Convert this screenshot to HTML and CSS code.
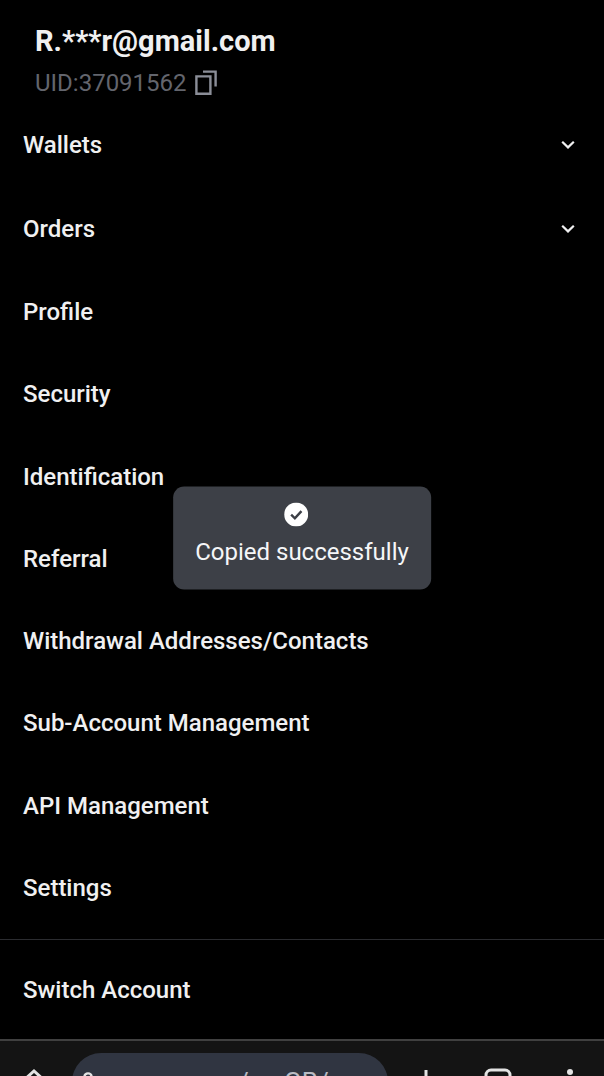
FILE: index.html
```
<!DOCTYPE html>
<html lang="en">
<head>
<meta charset="utf-8">
<meta name="viewport" content="width=device-width, initial-scale=1">
<title>Account</title>
<link rel="stylesheet" href="styles.css">
</head>
<body class="screen">
<main class="account">
  <header class="user">
    <h1 class="user-email">R.***r@gmail.com</h1>
    <div class="user-id">
      <span>UID:37091562</span>
      <button class="icon-button" type="button" aria-label="Copy UID">
        <svg width="22" height="26" viewBox="0 0 22 26" fill="none" stroke="currentColor" stroke-width="2.4"><path d="M1.4 6.4h14v17.4h-14zM8 1.6h12.6v15"/></svg>
      </button>
    </div>
  </header>
  <nav class="menu">
    <button class="menu-row menu-group" type="button" aria-expanded="false">Wallets
      <svg width="16" height="10" viewBox="0 0 16 10" fill="none" stroke="currentColor" stroke-width="2.2"><path d="M2.2 1.8 8 7.4l5.800-5.600"/></svg>
    </button>
    <button class="menu-row menu-group" type="button" aria-expanded="false">Orders
      <svg width="16" height="10" viewBox="0 0 16 10" fill="none" stroke="currentColor" stroke-width="2.2"><path d="M2.2 1.8 8 7.4l5.800-5.600"/></svg>
    </button>
    <a class="menu-row" href="#profile">Profile</a>
    <a class="menu-row" href="#security">Security</a>
    <a class="menu-row" href="#identification">Identification</a>
    <a class="menu-row" href="#referral">Referral</a>
    <a class="menu-row" href="#contacts">Withdrawal Addresses/Contacts</a>
    <a class="menu-row" href="#sub-account">Sub-Account Management</a>
    <a class="menu-row" href="#api">API Management</a>
    <a class="menu-row" href="#settings">Settings</a>
  </nav>
  <div class="switch">
    <button class="menu-row" type="button">Switch Account</button>
  </div>
</main>
<footer class="browser-bar">
  <button class="icon-button" type="button" aria-label="Home">
    <svg width="28" height="28" viewBox="0 0 28 28" fill="none" stroke="currentColor" stroke-width="3"><path d="M3 13 14 3l11 10M6 11v14h16V11"/></svg>
  </button>
  <a class="address" href="#address">
    <svg width="20" height="20" viewBox="0 0 20 20" fill="none" stroke="#e3e3e3" stroke-width="2.400"><circle cx="6" cy="5" r="3.600"/><path d="M12 6h7M1 15h7"/><circle cx="14" cy="15" r="3.600"/></svg>
    <span>mexc.com/en-GB/</span>
  </a>
  <div class="browser-actions">
    <button class="icon-button" type="button" aria-label="New tab">
      <svg width="28" height="28" viewBox="0 0 28 28" fill="none" stroke="currentColor" stroke-width="3"><path d="M14 3v22M3 14h22"/></svg>
    </button>
    <button class="icon-button" type="button" aria-label="Tabs">
      <svg width="28" height="28" viewBox="0 0 28 28" fill="none" stroke="currentColor" stroke-width="3"><rect x="2" y="3" width="24" height="23" rx="5"/></svg>
    </button>
    <button class="icon-button" type="button" aria-label="More">
      <svg width="28" height="28" viewBox="0 0 28 28" fill="currentColor"><circle cx="14" cy="5" r="3"/><circle cx="14" cy="14" r="3"/><circle cx="14" cy="23" r="3"/></svg>
    </button>
  </div>
</footer>
<div class="toast" role="status">
  <svg class="toast-icon" width="24" height="24" viewBox="0 0 24 24" fill="none"><circle cx="12" cy="12" r="12" fill="#fff"/><path d="m7 12.200 3.700 3.600 6.600-7.200" stroke="#3d4047" stroke-width="2.400"/></svg>
  <span>Copied successfully</span>
</div>
</body>
</html>
```
FILE: styles.css
```
* {
  box-sizing: border-box;
}

.screen {
  display: flex;
  flex-direction: column;
  height: 100vh;
  margin: 0;
  overflow: hidden;
  background: #000;
  color: #f0f0f1;
  font-family: Roboto, "Noto Sans", sans-serif;
  font-size: 24px;
  line-height: 32px;
}

svg {
  display: block;
  flex: none;
}

.account {
  display: flex;
  flex: 1;
  flex-direction: column;
}

.user {
  display: flex;
  flex-direction: column;
  gap: 8px;
  padding: 24px 35px 4px;
}

.user-email {
  margin: 0;
  font-size: 29px;
  font-weight: 700;
  line-height: 35px;
}

.user-id {
  display: flex;
  align-items: center;
  gap: 8px;
  color: #63656d;
}

.icon-button {
  padding: 0;
  border: 0;
  background: none;
  color: inherit;
}

.user-id .icon-button {
  color: #8b8e98;
}

.menu {
  display: flex;
  flex: 1;
  flex-direction: column;
  padding-bottom: 10px;
}

.menu-row {
  display: flex;
  flex: 1 1 auto;
  align-items: center;
  justify-content: space-between;
  width: 100%;
  padding: 0 28px 0 23px;
  border: 0;
  background: none;
  color: inherit;
  font: inherit;
  font-weight: 500;
  text-align: left;
  text-decoration: none;
}

.menu-group {
  flex: none;
  height: 84px;
}

.switch {
  display: flex;
  height: 100px;
  border-top: 1px solid #2b2c30;
}

.browser-bar {
  display: flex;
  align-items: flex-start;
  gap: 24px;
  height: 37px;
  padding: 12px 20px 0;
  overflow: hidden;
  border-top: 2px solid #404040;
  background: #141414;
  color: #e3e3e3;
}

.browser-bar > .icon-button {
  padding-top: 15px;
}

.address {
  display: flex;
  flex: 1;
  align-items: center;
  gap: 15px;
  height: 58px;
  padding: 0 10px;
  overflow: hidden;
  border-radius: 29px;
  background: #303541;
  color: #b9bcc4;
  font-size: 26px;
  text-decoration: none;
}

.browser-actions {
  display: flex;
  gap: 44px;
  padding-top: 14px;
}

.toast {
  position: fixed;
  top: 50%;
  left: 50%;
  display: flex;
  flex-direction: column;
  align-items: center;
  gap: 9px;
  padding: 16px 22px 22px;
  border-radius: 11px;
  background: #3d4047;
  color: #f5f6f8;
  white-space: nowrap;
  transform: translate(-50%, -50%);
}

.toast-icon {
  margin-right: 12px;
}
```
